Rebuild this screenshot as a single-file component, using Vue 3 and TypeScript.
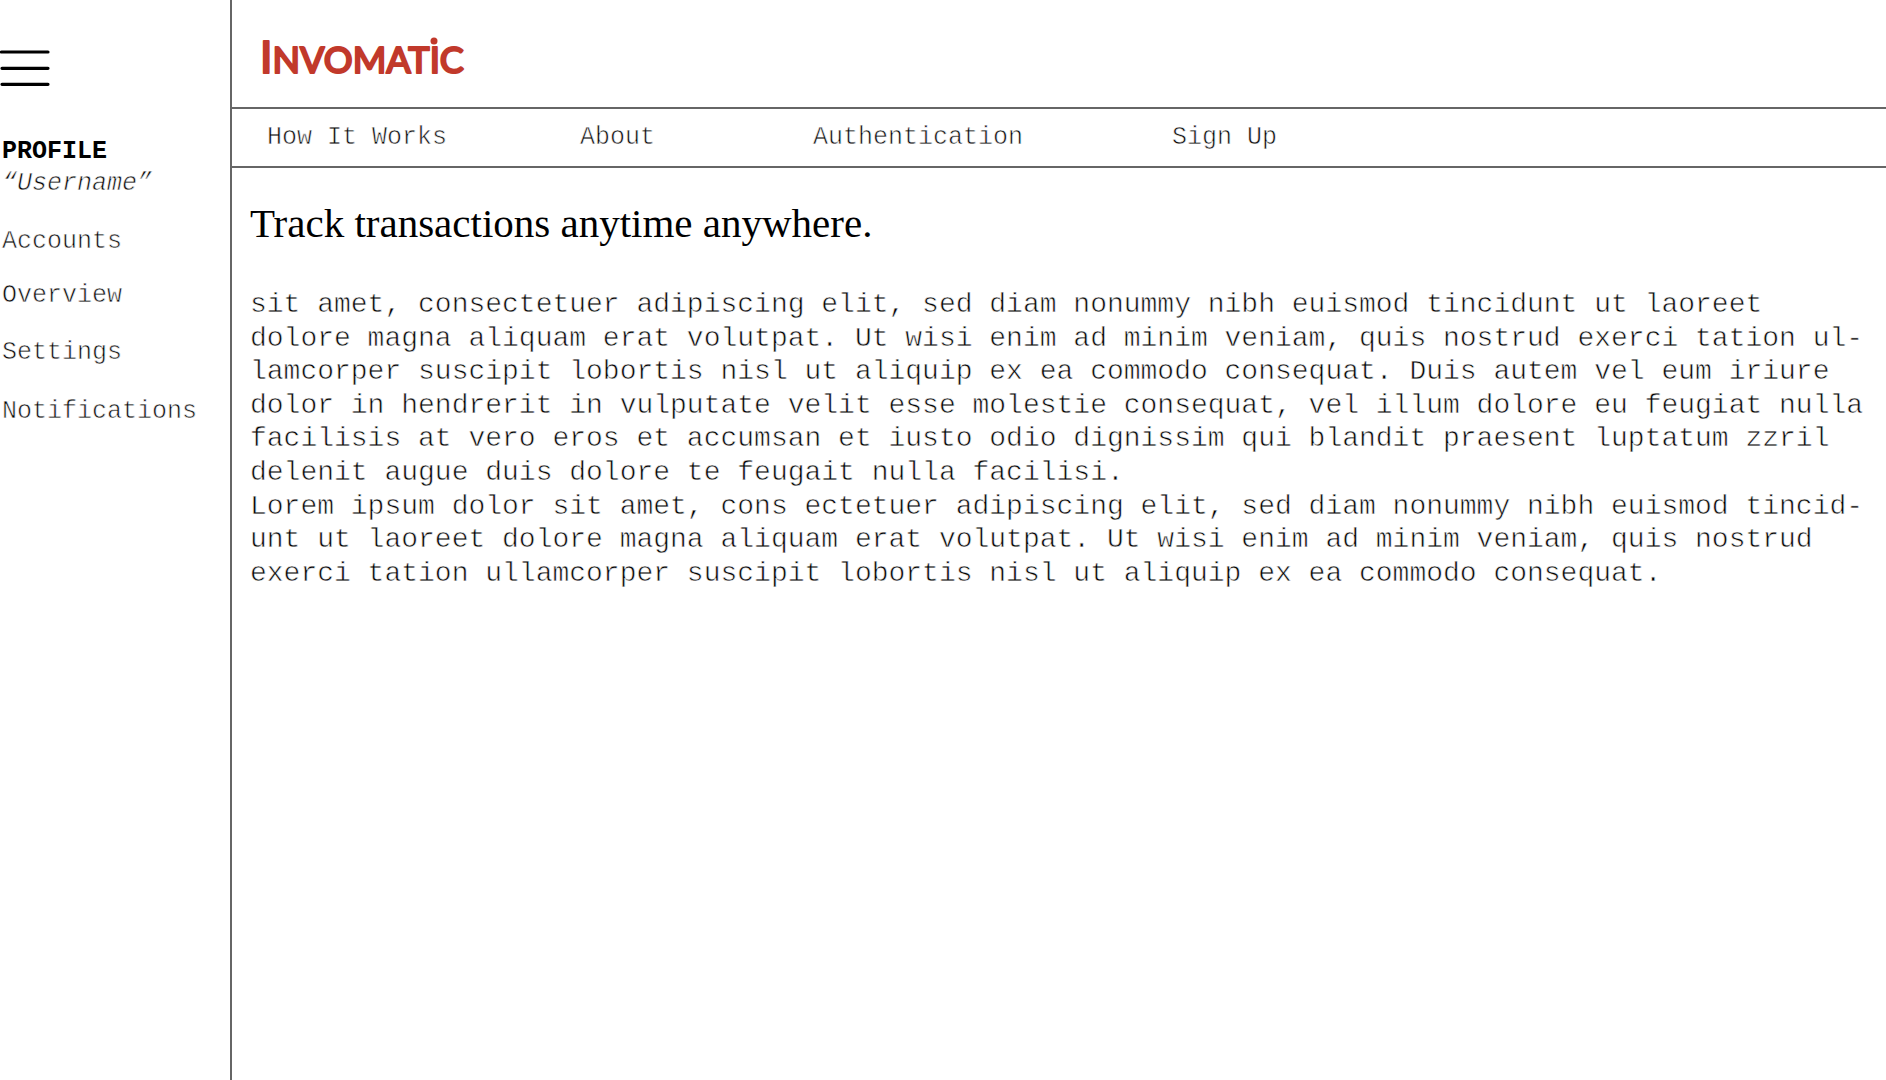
<script setup lang="ts">
interface LinkItem {
  label: string
  href: string
}

const sideLinks: LinkItem[] = [
  { label: 'Accounts', href: '#accounts' },
  { label: 'Overview', href: '#overview' },
  { label: 'Settings', href: '#settings' },
  { label: 'Notifications', href: '#notifications' },
]

const topLinks: LinkItem[] = [
  { label: 'How It Works', href: '#how' },
  { label: 'About', href: '#about' },
  { label: 'Authentication', href: '#auth' },
  { label: 'Sign Up', href: '#signup' },
]
</script>

<template>
  <div class="page">
    <aside class="sidebar">
      <button class="menu" type="button" aria-label="Menu">
        <svg width="50" height="40" viewBox="0 0 50 40" aria-hidden="true">
          <path d="M1.5 4H48M2 20.300H48M2 36.300H48" stroke="#000" stroke-width="3.200" stroke-linecap="round" />
        </svg>
      </button>
      <div class="profile">
        <strong>PROFILE</strong>
        <em>“Username”</em>
      </div>
      <nav class="side-nav" aria-label="Profile">
        <a v-for="item in sideLinks" :key="item.label" :href="item.href">{{ item.label }}</a>
      </nav>
    </aside>

    <div class="main">
      <header class="brand">
        <a class="logo" href="#home">
          <svg width="220" height="70" viewBox="0 0 220 70">
            <text class="wordmark" x="4" y="51"><tspan class="initial">I</tspan><tspan>NVOMATIC</tspan></text>
            <circle cx="178" cy="19" r="3.500" />
          </svg>
        </a>
      </header>
      <nav class="top-nav" aria-label="Main">
        <a v-for="item in topLinks" :key="item.label" :href="item.href">{{ item.label }}</a>
      </nav>
      <main class="content">
        <h1>Track transactions anytime anywhere.</h1>
        <p>
          sit amet, consectetuer adipiscing elit, sed diam nonummy nibh euismod tincidunt ut laoreet<br />
          dolore magna aliquam erat volutpat. Ut wisi enim ad minim veniam, quis nostrud exerci tation ul-<br />
          lamcorper suscipit lobortis nisl ut aliquip ex ea commodo consequat. Duis autem vel eum iriure<br />
          dolor in hendrerit in vulputate velit esse molestie consequat, vel illum dolore eu feugiat nulla<br />
          facilisis at vero eros et accumsan et iusto odio dignissim qui blandit praesent luptatum zzril<br />
          delenit augue duis dolore te feugait nulla facilisi.
        </p>
        <p>
          Lorem ipsum dolor sit amet, cons ectetuer adipiscing elit, sed diam nonummy nibh euismod tincid-<br />
          unt ut laoreet dolore magna aliquam erat volutpat. Ut wisi enim ad minim veniam, quis nostrud<br />
          exerci tation ullamcorper suscipit lobortis nisl ut aliquip ex ea commodo consequat.
        </p>
      </main>
    </div>
  </div>
</template>

<style>
body {
  margin: 0;
  background: #fff;
}
</style>

<style scoped>
.page {
  display: flex;
  min-height: 100vh;
  color: #000;
  font-family: "Courier New", "Liberation Mono", monospace;
  font-size: 25px;
  line-height: 32px;
}

a {
  color: inherit;
  text-decoration: none;
}

/* A hairline in the page colour keeps the typewriter text light. */
p,
em,
.side-nav,
.top-nav {
  -webkit-text-stroke: 1px rgba(255, 255, 255, 0.75);
}

.sidebar {
  box-sizing: border-box;
  flex: none;
  width: 232px;
  padding-top: 48px;
  border-right: 2px solid #666;
}

.menu {
  display: block;
  padding: 0;
  border: 0;
  background: none;
}

.menu svg {
  display: block;
  fill: none;
}

.profile {
  display: flex;
  flex-direction: column;
  padding: 48px 2px 26px;
}

.side-nav {
  display: grid;
  grid-template-rows: 54px 57px 59px 32px;
  padding-left: 2px;
}

.main {
  flex: 1;
  min-width: 0;
}

.brand {
  padding: 22px 24px 15px;
  border-bottom: 2px solid #666;
}

.logo,
.logo svg {
  display: block;
}

.logo svg {
  overflow: visible;
}

.logo {
  width: 220px;
}

.wordmark,
.logo circle {
  fill: #c1392b;
}

.wordmark {
  font-family: Lato, sans-serif;
  font-size: 36px;
  font-weight: 500;
  stroke: #c1392b;
  stroke-width: 2px;
  stroke-linejoin: round;
}

.initial {
  font-size: 44px;
}

.top-nav {
  display: grid;
  grid-template-columns: 313px 233px 359px auto;
  padding: 13px 0 12px 35px;
  border-bottom: 2px solid #666;
}

.content {
  padding: 34px 16px 24px 18px;
}

h1 {
  margin: 0 0 44px;
  font-family: "Liberation Serif", serif;
  font-size: 41px;
  font-weight: 400;
  line-height: 42px;
}

p {
  margin: 0;
  font-size: 28px;
  line-height: 1.2;
}
</style>
